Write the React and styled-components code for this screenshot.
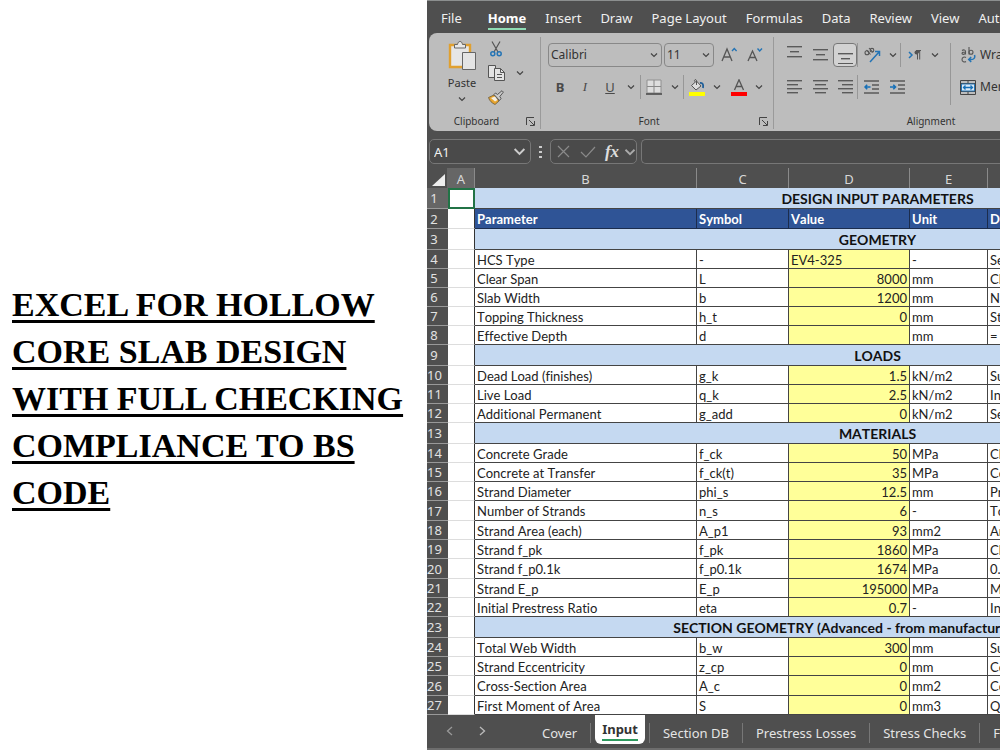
import React from 'react';
import styled, { createGlobalStyle, css } from 'styled-components';

const GlobalStyle = createGlobalStyle`
    * {
        box-sizing: border-box;
    }

    body {
        margin: 0;
        background: #fff;
        overflow: hidden;
    }

    button, input, select {
        font: inherit;
        color: inherit;
        margin: 0;
        padding: 0;
        border: 0;
        background: none;
        outline: none;
    }
`;

const Page = styled.main`
    display: grid;
    grid-template-columns: minmax(0, 427fr) minmax(0, 573fr);
    min-height: 100vh;
    background: #fff;
`;

const Intro = styled.section`
    display: flex;
    align-items: center;
    padding: 46px 8px 0 12px;
`;

const Title = styled.h1`
    margin: 0;
    color: #000;
    font: bold 34px/47px "Liberation Serif", serif;
    text-decoration: underline;
    text-decoration-thickness: 3px;
    text-underline-offset: 4px;
`;

const Excel = styled.section`
    display: flex;
    flex-direction: column;
    overflow: hidden;
    background: #4f4f4f;
    border-top: 1px solid #8c8f8f;
    color: #f0f0f0;
    font: 13px/18px "Noto Sans", sans-serif;
    white-space: nowrap;
`;

/* ---- ribbon tabs ---- */

const MenuBar = styled.nav`
    display: flex;
    gap: 19px;
    height: 32px;
    padding: 7px 0 0 14px;
`;

const MenuTab = styled.button`
    flex: none;
    height: 22px;
    border-bottom: 2px solid transparent;

    &:first-child {
        margin-right: 7px;
    }

    ${({ $active }) => $active && css`
        font-weight: 700;
        color: #fff;
        border-bottom-color: #8fdcb4;
    `}
`;

/* ---- ribbon ---- */

const Ribbon = styled.div`
    display: flex;
    flex: none;
    height: 98px;
    margin-left: 2px;
    padding: 4px 0 2px;
    border-radius: 8px 0 0 8px;
    background: #bdbdbd;
    color: #333;
    font-size: 12px;
`;

const Group = styled.div`
    display: flex;
    flex: none;
    flex-direction: column;
    justify-content: space-between;
    width: ${({ $width }) => $width}px;
    border-right: 1px solid #9a9a9a;
`;

const GroupFooter = styled.div`
    display: grid;
    grid-template-columns: 1fr 16px;
    grid-template-rows: 16px;
    align-items: center;
    padding: 0 2px;
    font-size: 10px;
    text-align: center;
`;

const ClipboardBody = styled.div`
    display: flex;
    padding-left: 15px;
`;

const PasteButton = styled.button`
    display: flex;
    flex-direction: column;
    align-items: center;
    width: 36px;
    padding-top: 3px;
    font-size: 11px;
    line-height: 24px;
`;

const ClipboardTools = styled.div`
    display: grid;
    grid-template-columns: 32px 16px;
    grid-auto-rows: 24px;
    align-items: center;
`;

const ToolRows = styled.div`
    display: flex;
    flex-direction: column;
    gap: 8px;
    padding: 6px 0 0 7px;
`;

const ToolRow = styled.div`
    display: flex;
    align-items: center;
    height: 24px;
`;

const Tool = styled.button`
    display: flex;
    flex: none;
    align-items: center;
    justify-content: center;
    width: ${({ $width }) => $width || 26}px;
    height: 24px;
    border-radius: 4px;

    ${({ $pressed }) => $pressed && css`
        border: 1px solid #777;
        background: #d2d2d2;
    `}
`;

const Launcher = styled(Tool)`
    width: 16px;
    height: 16px;
`;

const WideTool = styled.button`
    display: flex;
    align-items: center;
    gap: 4px;
    height: 24px;
`;

const Separator = styled.span`
    flex: none;
    width: 1px;
    height: 24px;
    background: #979797;
`;

const SelectBox = styled.label`
    display: flex;
    align-items: center;
    width: ${({ $width }) => $width}px;
    height: 24px;
    margin-right: 2px;
    padding: 0 3px 0 2px;
    border: 1px solid #888;
    border-radius: 4px;

    select {
        flex: 1;
        min-width: 0;
        appearance: none;
    }
`;

const AlignmentBody = styled.div`
    display: flex;
`;

const AlignSeparator = styled(Separator)`
    height: 62px;
    margin: 6px 2px 0 9px;
`;

/* ---- formula bar ---- */

const FormulaBar = styled.div`
    display: flex;
    align-items: center;
    flex: none;
    height: 37px;
    padding: 4px 0 0 2px;
`;

const BarBox = styled.div`
    display: flex;
    align-items: center;
    height: 25px;
    border: 1px solid #777;
    border-radius: 5px;
    background: #4a4a4a;
`;

const NameBox = styled(BarBox)`
    width: 102px;
    padding: 0 4px;

    input {
        flex: 1;
        min-width: 0;
    }
`;

const Grip = styled.span`
    display: flex;
    justify-content: center;
    width: 19px;
`;

const FormulaInput = styled(BarBox)`
    flex: 1;
    margin-left: 4px;
    border-right: 0;
    border-radius: 5px 0 0 5px;

    input {
        width: 100%;
    }
`;

/* ---- sheet ---- */

const Sheet = styled.table`
    flex: none;
    width: 853px;
    table-layout: fixed;
    border-collapse: separate;
    border-spacing: 0;
    background: #fff;
    color: #222;
    font: 13px/16px Lato, sans-serif;
    font-kerning: none;
    font-variant-ligatures: none;
`;

const ColumnHead = styled.th`
    height: 20px;
    padding: 2px 0 0;
    border-right: 1px solid #8a8a8a;
    background: ${({ $active }) => ($active ? '#666' : '#4f4f4f')};
    color: #d8d8d8;
    font: 13px/16px "Noto Sans", sans-serif;
`;

const Corner = styled(ColumnHead)`
    padding: 0 1px 2px 5px;
    vertical-align: bottom;
    border-right-color: #666;

    svg {
        display: block;
    }
`;

const RowHead = styled.th`
    padding: 0 7px 0 0;
    border-bottom: 1px solid #999;
    background: ${({ $active }) => ($active ? '#666' : '#4f4f4f')};
    color: #e2e2e2;
    font: 13px/16px "Noto Sans", sans-serif;
    text-align: center;
`;

const Row = styled.tr`
    height: ${({ $height }) => $height}px;
`;

const Cell = styled.td`
    overflow: hidden;
    padding: 1px 2px 0;
    border-right: 1px solid #444;
    border-bottom: 1px solid #444;
    background: ${({ $input }) => ($input ? '#ffff99' : '#fff')};
    text-align: ${({ $right }) => ($right ? 'right' : 'left')};
`;

const BlankCell = styled(Cell)`
    border-right-color: #333;
    border-bottom-color: #ddd;

    ${({ $selected }) => $selected && css`
        border: 2px solid #217346;
    `}
`;

const HeadCell = styled.th`
    padding: 0 2px;
    border-right: 1px solid #1c2d4d;
    border-bottom: 1px solid #1c2d4d;
    background: #2f5496;
    color: #fff;
    text-align: left;
`;

const SectionCell = styled.th`
    padding: 1px 0 0;
    border-bottom: 1px solid #444;
    background: #c5d9f1;
    color: #111;
    font-size: 14px;
`;

/* ---- sheet tabs ---- */

const SheetBar = styled.nav`
    display: flex;
    flex: 1;
    align-items: flex-start;
    border-bottom: 2px solid #6d6d6d;
    color: #e4e4e4;
`;

const SheetNav = styled.button`
    display: flex;
    flex: none;
    justify-content: center;
    align-items: center;
    width: 33px;
    height: 32px;

    &:first-child {
        margin-left: 6px;
    }

    &:nth-child(2) {
        margin-right: 30px;
    }
`;

const SheetTab = styled.button`
    flex: none;
    height: 20px;
    margin-top: 8px;
    padding: 0 13px;
    border-right: 1px solid #777;

    ${({ $active }) => $active && css`
        height: 29px;
        margin: 0 4px;
        padding: 0 7px;
        border: 0;
        border-radius: 0 0 6px 6px;
        background: #fff;
        color: #333;
        font-weight: 700;

        span {
            display: block;
            border-bottom: 2px solid #2e9a5e;
            line-height: 20px;
        }
    `}
`;

const TabSeparator = styled(Separator)`
    height: 20px;
    margin-top: 8px;
    background: #777;
`;

/* ---- icons ---- */

const Chevron = ({ size = 8, color = '#444' }) => (
    <svg width={size} height={size} viewBox="0 0 8 8" fill="none" stroke={color} strokeWidth="1.2">
        <path d="M1 2.5 4 5.5 7 2.5" />
    </svg>
);

const PasteIcon = () => (
    <svg width="28" height="31" viewBox="0 0 28 31" fill="none">
        <path d="M2 5h20v22H2z" fill="#e6e6e6" stroke="#e0a030" strokeWidth="2.4" />
        <path d="M6.500 8V4.500h3C10 2.500 10.500 1.500 12 1.500s2 1 2.500 3h3V8z" fill="#e8e8e8" stroke="#666" />
        <path d="M14.500 12.500h13v17h-13z" fill="#e4e4e4" stroke="#666" />
    </svg>
);

const CutIcon = () => (
    <svg width="12" height="16" viewBox="0 0 12 16" fill="none" strokeWidth="1.2">
        <path d="M2 0.500 8 11M10 0.500 4 11" stroke="#555" />
        <circle cx="2.800" cy="12.800" r="2" stroke="#2474b5" strokeWidth="1.500" />
        <circle cx="9.200" cy="12.800" r="2" stroke="#2474b5" strokeWidth="1.500" />
    </svg>
);

const CopyIcon = () => (
    <svg width="17" height="16" viewBox="0 0 17 16" fill="#e4e4e4" stroke="#555">
        <path d="M0.500 0.500h7v12h-7z" />
        <path d="M6.500 3.500h6l4 4v8h-10z" />
        <path d="M12.500 3.500v4h4M9 9.500h5M9 12.500h5" fill="none" />
    </svg>
);

const BrushIcon = () => (
    <svg width="16" height="15" viewBox="0 0 16 15">
        <path d="M0.500 7.500 6 5l5 6-4 3.500C4 13 1.500 11 0.500 7.500z" fill="#e8a52e" stroke="#6b5a3a" strokeWidth="0.800" />
        <path d="M3 8 7 6.500l2.500 3.500-2.500 1.500z" fill="#f4efe4" />
        <path d="m6 4.500 1.500-1.500 2 1.500L14 0.700l1.400 1.400-3.600 4.400L13 8.500 11.500 10.500z" fill="#ccc" stroke="#555" />
    </svg>
);

const LauncherIcon = () => (
    <svg width="9" height="9" viewBox="0 0 9 9" fill="none" stroke="#444">
        <path d="M8 0.500H0.500V8M3 3l5 5M8.500 4v4.500H4" />
    </svg>
);

const BordersIcon = () => (
    <svg width="16" height="16" viewBox="0 0 16 16" fill="none">
        <path d="M1 1h14v13H1z" fill="#dedede" stroke="#909090" />
        <path d="M8 1v13M1 7.500h14" stroke="#888" />
        <path d="M0 15h16" stroke="#444" strokeWidth="1.500" />
    </svg>
);

const FillIcon = () => (
    <svg width="16" height="17" viewBox="0 0 16 17" fill="none">
        <path d="M7.500 2 12 7l-5 4-4.500-4.500z" fill="#ddd" stroke="#555" />
        <path d="M7.500 6V1.500C7 0 5 0.500 5.500 2.500" stroke="#555" />
        <path d="M11 4c3-0.500 3.500 2 3 5" stroke="#1f5f99" strokeWidth="1.800" />
        <path d="M0 13h16v4H0z" fill="#ff0" />
    </svg>
);

const FontColorIcon = () => (
    <svg width="16" height="17" viewBox="0 0 16 17" fill="none">
        <path d="M3.500 11 8 0.800 12.500 11M5 7.500h6" stroke="#555" strokeWidth="1.300" />
        <path d="M0 13h16v4H0z" fill="#f00" />
    </svg>
);

const FontSizeIcon = ({ grow }) => (
    <svg width="16" height="16" viewBox="0 0 16 16" fill="none">
        <path
            d={grow ? 'M1 14 6 2l5 12M2.800 10h6.400' : 'M1 14 5.500 4l4.500 10M2.700 10.500h5.600'}
            stroke="#555"
            strokeWidth="1.300"
        />
        <path d={grow ? 'm11 4 2.300-2.500L15.600 4' : 'm10.500 1.500 2.200 2.500L15 1.500'} stroke="#2474b5" strokeWidth="1.400" />
    </svg>
);

// each line is [x, width]
const LINES = {
    top: [[0, 15], [3, 9], [0, 15]],
    middle: [[0, 15], [3, 9], [0, 15]],
    bottom: [[0, 15], [3, 9], [0, 15]],
    left: [[0, 15], [0, 11], [0, 15], [0, 11]],
    center: [[0, 15], [2, 11], [0, 15], [2, 11]],
    right: [[0, 15], [4, 11], [0, 15], [4, 11]]
};

const LINES_TOP = { top: 0, middle: 3, bottom: 7 };

const LinesIcon = ({ type }) => {
    const lines = LINES[type];
    const step = lines.length === 3 ? 5 : 4;
    const top = LINES_TOP[type] ?? 2;

    return (
        <svg width="15" height="18" viewBox="0 0 15 18" fill="#5a5a5a">
            {lines.map(([x, width], i) => (
                <rect key={i} x={x} y={top + i * step} width={width} height="1.400" />
            ))}
        </svg>
    );
};

const IndentIcon = ({ out }) => (
    <svg width="15" height="15" viewBox="0 0 15 15" fill="none">
        <path d="M0 1h15M8 5h7M8 9h7M0 13h15" stroke="#5a5a5a" strokeWidth="1.300" />
        <path d={out ? 'M6.500 7H1M3.200 4.700 1 7l2.200 2.300' : 'M0 7h5.500M3.300 4.700 5.500 7 3.300 9.300'} stroke="#1670b8" strokeWidth="1.600" />
    </svg>
);

const OrientationIcon = () => (
    <svg width="17" height="16" viewBox="0 0 17 16" fill="none">
        <path d="M6 15 15 5M11 4.500h4.500V9" stroke="#2474b5" strokeWidth="1.500" />
        <g stroke="#555" strokeWidth="1.100">
            <circle cx="3" cy="5.800" r="2" />
            <path d="m2.500 3 4 4.500M5 1l4 4.500" />
            <circle cx="8" cy="3.200" r="1.800" />
        </g>
    </svg>
);

const DirectionIcon = () => (
    <svg width="14" height="12" viewBox="0 0 14 12" fill="none">
        <path d="m1 3 3 3-3 3" stroke="#2474b5" strokeWidth="1.500" />
        <path d="M12.500 1.500H8.500a2 2 0 0 0 0 4h1z" fill="#555" />
        <path d="M9.500 1.500v9M11.700 1.500v9M8 1.500h5" stroke="#555" />
    </svg>
);

const WrapIcon = () => (
    <svg width="16" height="16" viewBox="0 0 16 16" fill="none" stroke="#555" strokeWidth="1.100">
        <path d="M2 3.500c1.500-1 3.500-.8 3.500 1V7.500M5.500 5C3 5 2 5.500 2 6.500s2.500 1.500 3.500-.5M9 0v7.500" />
        <circle cx="11" cy="5.300" r="2" />
        <path d="M6 10.500c-1.500-1-4-.5-4 2s2.500 3 4 2" />
        <path d="M14.500 8c1 3-1 4.500-3 4.500H9M11.200 10 8.700 12.500l2.500 2.500" stroke="#2474b5" strokeWidth="1.500" />
    </svg>
);

const MergeIcon = () => (
    <svg width="16" height="15" viewBox="0 0 16 15" fill="none">
        <path d="M0.500 0.500h15v14h-15zM0.500 3.500h15M0.500 11.500h15M8 0.500v3M8 11.500v3" stroke="#444" />
        <path d="M1.500 4h13v7h-13z" fill="#dce9f5" stroke="#2474b5" />
        <path d="M3.500 7.500h9M5.500 5.500l-2 2 2 2M10.500 5.500l2 2-2 2" stroke="#1670b8" strokeWidth="1.300" />
    </svg>
);

const GripIcon = () => (
    <svg width="3" height="12" viewBox="0 0 3 12" fill="#ccc">
        <path d="M0 0h3v2H0zM0 5h3v2H0zM0 10h3v2H0z" />
    </svg>
);

const CancelIcon = () => (
    <svg width="13" height="13" viewBox="0 0 13 13" stroke="#8a8a8a" strokeWidth="1.200">
        <path d="m1 1 11 11M12 1 1 12" />
    </svg>
);

const EnterIcon = () => (
    <svg width="16" height="12" viewBox="0 0 16 12" fill="none" stroke="#8a8a8a" strokeWidth="1.200">
        <path d="m1 6 5 5L15 1" />
    </svg>
);

const FxLabel = styled.span`
    font: italic bold 17px/20px "Liberation Serif", serif;
    color: #ddd;
`;

const Glyph = styled.span`
    font-size: 13px;
    font-weight: ${({ $bold }) => ($bold ? 700 : 400)};
    font-family: ${({ $serif }) => ($serif ? '"Liberation Serif", serif' : 'inherit')};
    font-style: ${({ $serif }) => ($serif ? 'italic' : 'normal')};
    text-decoration: ${({ $underline }) => ($underline ? 'underline' : 'none')};
    color: #4a4a4a;
`;

/* ---- data ---- */

const MENU = ['File', 'Home', 'Insert', 'Draw', 'Page Layout', 'Formulas', 'Data', 'Review', 'View', 'Automate'];

const COLUMNS = [
    ['A', 27],
    ['B', 222],
    ['C', 92],
    ['D', 121],
    ['E', 78],
    ['F', 292]
];

const ROWS = [
    { section: 'DESIGN INPUT PARAMETERS' },
    { head: ['Parameter', 'Symbol', 'Value', 'Unit', 'Description'] },
    { section: 'GEOMETRY' },
    { cells: ['HCS Type', '-', 'EV4-325', '-', 'Se'] },
    { cells: ['Clear Span', 'L', '8000', 'mm', 'Cl'] },
    { cells: ['Slab Width', 'b', '1200', 'mm', 'N'] },
    { cells: ['Topping Thickness', 'h_t', '0', 'mm', 'St'] },
    { cells: ['Effective Depth', 'd', '', 'mm', '='] },
    { section: 'LOADS' },
    { cells: ['Dead Load (finishes)', 'g_k', '1.5', 'kN/m2', 'Su'] },
    { cells: ['Live Load', 'q_k', '2.5', 'kN/m2', 'In'] },
    { cells: ['Additional Permanent', 'g_add', '0', 'kN/m2', 'Se'] },
    { section: 'MATERIALS' },
    { cells: ['Concrete Grade', 'f_ck', '50', 'MPa', 'Ch'] },
    { cells: ['Concrete at Transfer', 'f_ck(t)', '35', 'MPa', 'Co'] },
    { cells: ['Strand Diameter', 'phi_s', '12.5', 'mm', 'Pr'] },
    { cells: ['Number of Strands', 'n_s', '6', '-', 'To'], height: 20 },
    { cells: ['Strand Area (each)', 'A_p1', '93', 'mm2', 'Ar'] },
    { cells: ['Strand f_pk', 'f_pk', '1860', 'MPa', 'Ch'] },
    { cells: ['Strand f_p0.1k', 'f_p0.1k', '1674', 'MPa', '0.'], height: 20 },
    { cells: ['Strand E_p', 'E_p', '195000', 'MPa', 'M'] },
    { cells: ['Initial Prestress Ratio', 'eta', '0.7', '-', 'In'] },
    { section: 'SECTION GEOMETRY (Advanced - from manufacturer datasheet)' },
    { cells: ['Total Web Width', 'b_w', '300', 'mm', 'Su'] },
    { cells: ['Strand Eccentricity', 'z_cp', '0', 'mm', 'Ce'] },
    { cells: ['Cross-Section Area', 'A_c', '0', 'mm2', 'Co'], height: 20 },
    { cells: ['First Moment of Area', 'S', '0', 'mm3', 'Q'] }
];

const SHEETS = ['Cover', 'Input', 'Section DB', 'Prestress Losses', 'Stress Checks', 'Flexure'];

const rowHeight = ({ section, head, height }) => {
    if (section) return 21;
    if (head) return 20;
    return height || 19;
};

const ClipboardGroup = () => (
    <Group $width={112}>
        <ClipboardBody>
            <PasteButton>
                <PasteIcon />
                Paste
                <Chevron />
            </PasteButton>
            <ClipboardTools>
                <Tool $width={32} aria-label="Cut"><CutIcon /></Tool>
                <span />
                <Tool $width={32} aria-label="Copy"><CopyIcon /></Tool>
                <Tool $width={16} aria-label="Copy options"><Chevron /></Tool>
                <Tool $width={32} aria-label="Format painter"><BrushIcon /></Tool>
            </ClipboardTools>
        </ClipboardBody>
        <GroupFooter>
            <span>Clipboard</span>
            <Launcher aria-label="Clipboard settings"><LauncherIcon /></Launcher>
        </GroupFooter>
    </Group>
);

const FontGroup = () => (
    <Group $width={233}>
        <ToolRows>
            <ToolRow>
                <SelectBox $width={114}>
                    <select aria-label="Font" defaultValue="Calibri"><option>Calibri</option></select>
                    <Chevron />
                </SelectBox>
                <SelectBox $width={50}>
                    <select aria-label="Font size" defaultValue="11"><option>11</option></select>
                    <Chevron />
                </SelectBox>
                <Tool aria-label="Increase font size"><FontSizeIcon grow /></Tool>
                <Tool aria-label="Decrease font size"><FontSizeIcon /></Tool>
            </ToolRow>
            <ToolRow>
                <Tool $width={24}><Glyph $bold>B</Glyph></Tool>
                <Tool><Glyph $serif>I</Glyph></Tool>
                <Tool $width={24}><Glyph $underline>U</Glyph></Tool>
                <Tool $width={18} aria-label="Underline options"><Chevron /></Tool>
                <Separator />
                <Tool aria-label="Borders"><BordersIcon /></Tool>
                <Tool $width={16} aria-label="Border options"><Chevron /></Tool>
                <Separator />
                <Tool aria-label="Fill color"><FillIcon /></Tool>
                <Tool $width={14} aria-label="Fill options"><Chevron /></Tool>
                <Tool $width={30} aria-label="Font color"><FontColorIcon /></Tool>
                <Tool $width={10} aria-label="Font color options"><Chevron /></Tool>
            </ToolRow>
        </ToolRows>
        <GroupFooter>
            <span>Font</span>
            <Launcher aria-label="Font settings"><LauncherIcon /></Launcher>
        </GroupFooter>
    </Group>
);

const AlignmentGroup = () => (
    <Group $width={331}>
        <AlignmentBody>
            <ToolRows>
                <ToolRow>
                    <Tool aria-label="Top align"><LinesIcon type="top" /></Tool>
                    <Tool aria-label="Middle align"><LinesIcon type="middle" /></Tool>
                    <Tool $width={24} $pressed aria-label="Bottom align"><LinesIcon type="bottom" /></Tool>
                    <Separator />
                    <Tool $width={28} aria-label="Orientation"><OrientationIcon /></Tool>
                    <Tool $width={14} aria-label="Orientation options"><Chevron /></Tool>
                    <Separator />
                    <Tool $width={28} aria-label="Text direction"><DirectionIcon /></Tool>
                    <Tool $width={12} aria-label="Direction options"><Chevron /></Tool>
                </ToolRow>
                <ToolRow>
                    <Tool aria-label="Align left"><LinesIcon type="left" /></Tool>
                    <Tool aria-label="Center"><LinesIcon type="center" /></Tool>
                    <Tool $width={24} aria-label="Align right"><LinesIcon type="right" /></Tool>
                    <Separator />
                    <Tool aria-label="Decrease indent"><IndentIcon out /></Tool>
                    <Tool aria-label="Increase indent"><IndentIcon /></Tool>
                </ToolRow>
            </ToolRows>
            <AlignSeparator />
            <ToolRows>
                <WideTool><WrapIcon />Wrap Text</WideTool>
                <WideTool><MergeIcon />Merge &amp; Center</WideTool>
            </ToolRows>
        </AlignmentBody>
        <GroupFooter>
            <span>Alignment</span>
            <Launcher aria-label="Alignment settings"><LauncherIcon /></Launcher>
        </GroupFooter>
    </Group>
);

const SheetRow = ({ row, number }) => (
    <Row $height={rowHeight(row)}>
        <RowHead scope="row" $active={number === 1}>{number}</RowHead>
        <BlankCell $selected={number === 1} />
        {row.section && <SectionCell colSpan={5}>{row.section}</SectionCell>}
        {row.head && row.head.map((text) => <HeadCell key={text}>{text}</HeadCell>)}
        {row.cells && row.cells.map((text, i) => (
            <Cell key={i} $input={i === 2} $right={i === 2 && text !== 'EV4-325'}>{text}</Cell>
        ))}
    </Row>
);

const App = () => (
    <>
        <GlobalStyle />
        <Page>
            <Intro>
                <Title>EXCEL FOR HOLLOW CORE SLAB DESIGN WITH FULL CHECKING COMPLIANCE TO BS CODE</Title>
            </Intro>
            <Excel>
                <MenuBar>
                    {MENU.map((name) => (
                        <MenuTab key={name} $active={name === 'Home'}>{name}</MenuTab>
                    ))}
                </MenuBar>
                <Ribbon>
                    <ClipboardGroup />
                    <FontGroup />
                    <AlignmentGroup />
                </Ribbon>
                <FormulaBar>
                    <NameBox>
                        <input aria-label="Name box" defaultValue="A1" />
                        <Chevron size={13} color="#ccc" />
                    </NameBox>
                    <Grip><GripIcon /></Grip>
                    <BarBox>
                        <Tool $width={25} aria-label="Cancel"><CancelIcon /></Tool>
                        <Tool $width={24} aria-label="Enter"><EnterIcon /></Tool>
                        <Tool $width={24} aria-label="Insert function"><FxLabel>fx</FxLabel></Tool>
                        <Tool $width={12} aria-label="Function options"><Chevron size={12} color="#aaa" /></Tool>
                    </BarBox>
                    <FormulaInput><input aria-label="Formula" /></FormulaInput>
                </FormulaBar>
                <Sheet>
                    <colgroup>
                        <col width="21" />
                        {COLUMNS.map(([name, width]) => <col key={name} width={width} />)}
                    </colgroup>
                    <thead>
                        <tr>
                            <Corner>
                                <svg width="13" height="12" viewBox="0 0 13 12"><path d="M13 0v12H0z" fill="#eee" /></svg>
                            </Corner>
                            {COLUMNS.map(([name]) => (
                                <ColumnHead key={name} scope="col" $active={name === 'A'}>{name}</ColumnHead>
                            ))}
                        </tr>
                    </thead>
                    <tbody>
                        {ROWS.map((row, i) => <SheetRow key={i} row={row} number={i + 1} />)}
                    </tbody>
                </Sheet>
                <SheetBar>
                    <SheetNav aria-label="Previous sheet">
                        <svg width="7" height="10" viewBox="0 0 7 10" fill="none" stroke="#999" strokeWidth="1.300"><path d="M6 1 1.500 5 6 9" /></svg>
                    </SheetNav>
                    <SheetNav aria-label="Next sheet">
                        <svg width="7" height="10" viewBox="0 0 7 10" fill="none" stroke="#bbb" strokeWidth="1.300"><path d="m1 1 4.500 4L1 9" /></svg>
                    </SheetNav>
                    {SHEETS.map((name) => (
                        <React.Fragment key={name}>
                            <SheetTab $active={name === 'Input'}><span>{name}</span></SheetTab>
                            {name === 'Input' && <TabSeparator />}
                        </React.Fragment>
                    ))}
                </SheetBar>
            </Excel>
        </Page>
    </>
);

export default App;
